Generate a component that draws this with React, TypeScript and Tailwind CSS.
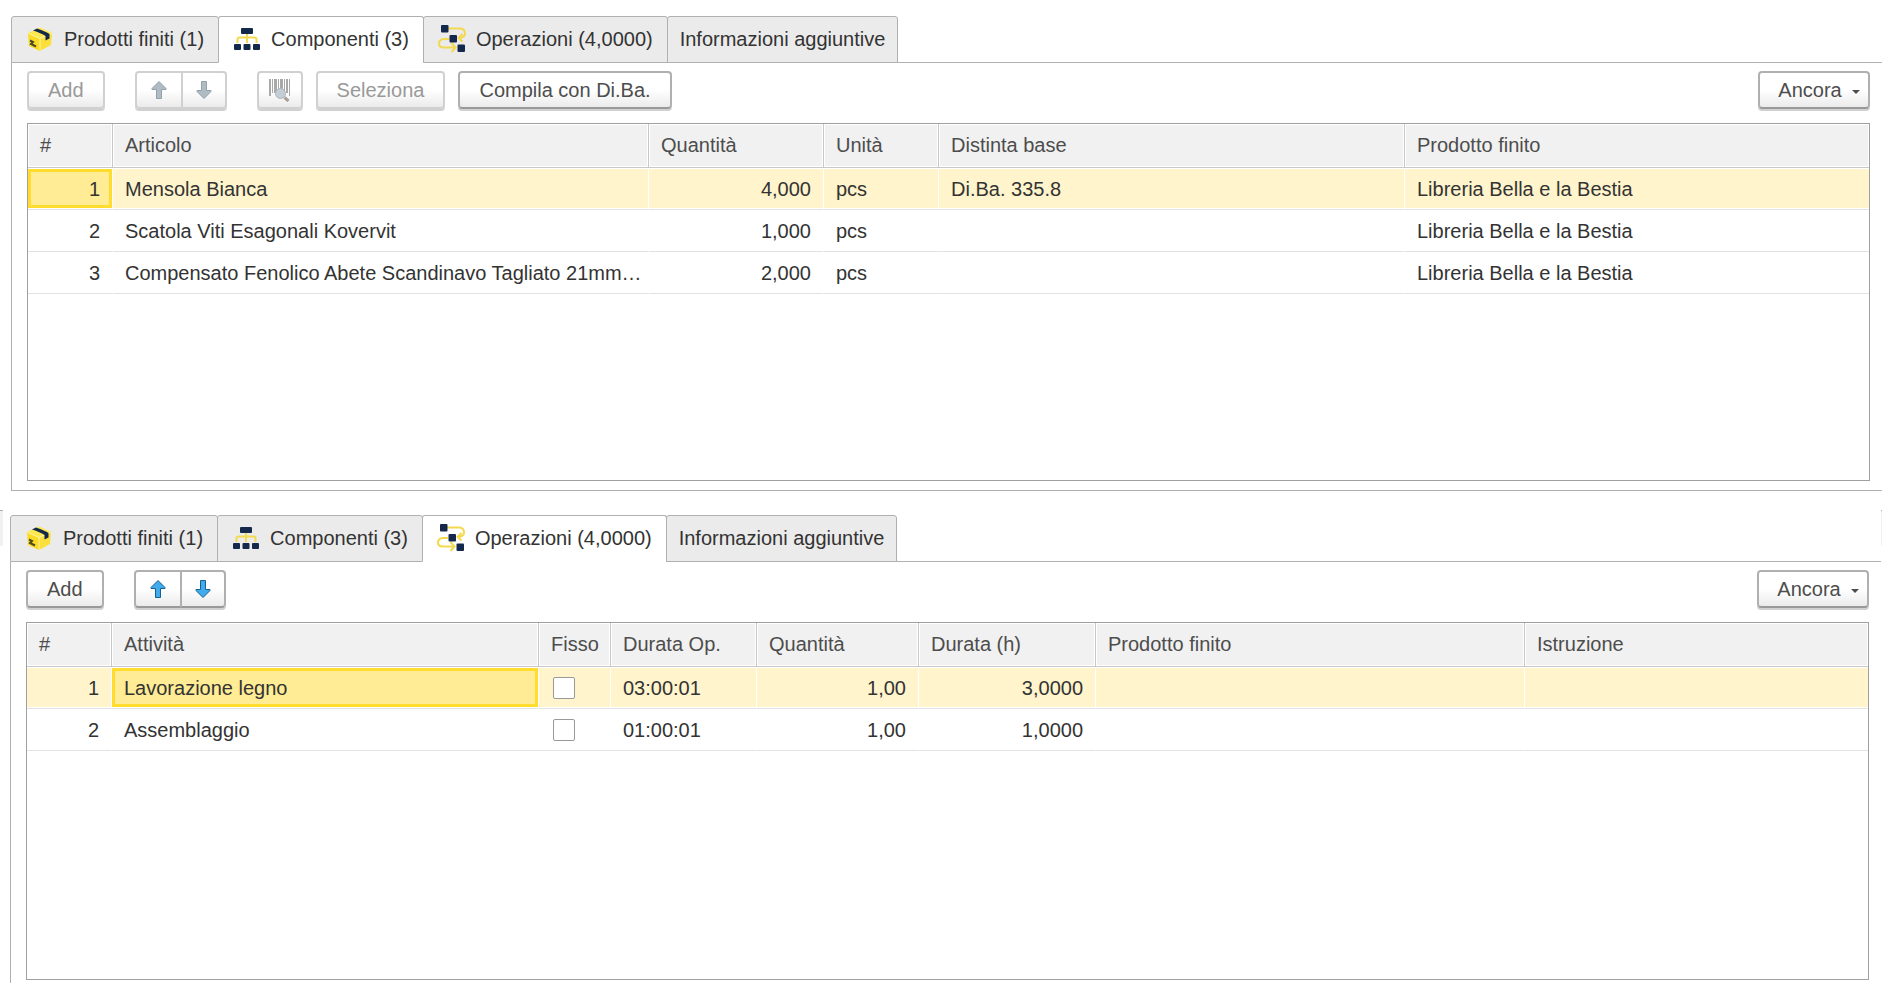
import type { ReactNode } from "react";
import clsx from "clsx";

function BoxIcon() {
  return (
    <svg width="28" height="28" viewBox="0 0 28 28" aria-hidden="true">
      <path d="M2 8 14 13.500v12.500L3 21Z" fill="#fbdb24" />
      <path d="M14 13.500 26 8l-1 12-11 6Z" fill="#fbe03c" />
      <path d="M2 8 14 2.500 26 8 14 13.500Z" fill="#fde84f" />
      <path d="M2.500 8.500 14 13.500v12M14 13.500 25.500 8.500" fill="none" stroke="#fff3a0" strokeWidth="1" />
      <path d="M7 5.500 11 3.500Q20 6.500 23.500 9v4.500L19.500 15.500V11Q15 8 7 5.500Z" fill="#14284b" />
      <path d="m4 15.500 3 1.500-2 2 5 2.500" fill="none" stroke="#4a4a2a" strokeWidth="2" />
    </svg>
  );
}

function TreeIcon() {
  return (
    <svg width="28" height="28" viewBox="0 0 28 28" aria-hidden="true">
      <path
        d="M14 9v9M4.500 18v-3.500q0-2 2-2h15q2 0 2 2V18"
        fill="none"
        stroke="#f2d94e"
        strokeWidth="2"
      />
      <rect x="8" y="3" width="12" height="6" rx="1" fill="#14284b" />
      <rect x="1" y="19" width="7" height="6" rx="1" fill="#14284b" />
      <rect x="10.500" y="19" width="7" height="6" rx="1" fill="#14284b" />
      <rect x="20" y="19" width="7" height="6" rx="1" fill="#14284b" />
    </svg>
  );
}

function FlowIcon() {
  return (
    <svg width="28" height="28" viewBox="0 0 28 28" aria-hidden="true">
      <g fill="none" stroke="#f2d94e" strokeWidth="2">
        <path d="M10 3.500h13q4 1 4 5 0 4-6 4.500" />
        <path d="m24.500 9-4 4 4 3.500" />
        <path d="M11 14H6q-5 .5-5 4.500t5 4h11" />
        <path d="m13.500 18 4 4.500-4 4.500" />
      </g>
      <rect x="3" y="0" width="7.500" height="7.500" rx="1" fill="#14284b" />
      <rect x="11.500" y="10" width="7.500" height="7.500" rx="1" fill="#14284b" />
      <rect x="19.500" y="19.500" width="7.500" height="7.500" rx="1" fill="#14284b" />
    </svg>
  );
}

function ArrowIcon({ down, disabled }: { down?: boolean; disabled?: boolean }) {
  return (
    <svg width="18" height="20" viewBox="0 0 18 20" aria-hidden="true">
      <path
        d={
          down
            ? "M6.500 1.500h5v9h4.500v1L9 18.500 2 11.500v-1h4.500Z"
            : "M6.500 18.500h5v-9h4.500v-1L9 1.500 2 8.500v1h4.500Z"
        }
        fill={disabled ? "#afbcc3" : "#42abee"}
        stroke={disabled ? "#93a1a9" : "#16608f"}
        strokeLinejoin="round"
      />
    </svg>
  );
}

function BarcodeIcon() {
  return (
    <svg width="24" height="24" viewBox="0 0 24 24" aria-hidden="true">
      <g fill="#a9a9a9">
        <rect x="1" y="1" width="2" height="17" />
        <rect x="4" y="1" width="1" height="14" />
        <rect x="6" y="1" width="3" height="14" />
        <rect x="10" y="1" width="1" height="11" />
        <rect x="12" y="1" width="3" height="10" />
        <rect x="16" y="1" width="1" height="12" />
        <rect x="18" y="1" width="2" height="14" />
        <rect x="21" y="1" width="1" height="17" />
      </g>
      <path d="m16.500 19.500 4 3.500" stroke="#aaa095" strokeWidth="3" />
      <circle cx="12.500" cy="15.500" r="5" fill="#c3ced6" stroke="#adb5bb" />
    </svg>
  );
}

const tabs = [
  { label: "Prodotti finiti (1)", icon: <BoxIcon /> },
  { label: "Componenti (3)", icon: <TreeIcon /> },
  { label: "Operazioni (4,0000)", icon: <FlowIcon /> },
  { label: "Informazioni aggiuntive", icon: null },
];

function Tabs({ active }: { active: number }) {
  return (
    <div role="tablist" className="flex border-b border-[#b0b0b0]">
      {tabs.map((tab, i) => (
        <button
          key={tab.label}
          type="button"
          role="tab"
          aria-selected={i === active}
          className={clsx(
            "-mb-px -ml-px flex h-[47px] items-center gap-2.5 whitespace-nowrap rounded-t-[3px] border border-[#b0b0b0] pb-0.5 text-[#333]",
            tab.icon ? "px-3.5" : "px-3",
            i === active ? "border-b-white bg-white" : "bg-[#ebebeb]"
          )}
        >
          {tab.icon}
          {tab.label}
        </button>
      ))}
    </div>
  );
}

type ButtonProps = {
  children: ReactNode;
  disabled?: boolean;
  label?: string;
  className?: string;
};

function Button({ children, disabled, label, className }: ButtonProps) {
  return (
    <button
      type="button"
      disabled={disabled}
      aria-label={label}
      className={clsx(
        "flex h-[38px] items-center justify-center whitespace-nowrap rounded border-2 bg-linear-to-b from-white from-50% to-[#ebebeb] shadow-[0_2px_0_#d0d0d0]",
        disabled
          ? "border-[#d0d0d0] text-[#999]"
          : "border-[#b0b0b0] border-b-[#999] text-[#4d4d4d]",
        className
      )}
    >
      {children}
    </button>
  );
}

function Toolbar({ disabled, children }: { disabled?: boolean; children?: ReactNode }) {
  return (
    <div className="mb-3.5 flex">
      <Button disabled={disabled} className="px-[19px]">
        Add
      </Button>
      <div className="ml-[30px] flex">
        <Button disabled={disabled} label="Sposta su" className="w-12 rounded-r-none">
          <ArrowIcon disabled={disabled} />
        </Button>
        <Button disabled={disabled} label="Sposta giù" className="-ml-0.5 w-[46px] rounded-l-none">
          <ArrowIcon down disabled={disabled} />
        </Button>
      </div>
      {children}
      <Button className="ml-auto w-28 gap-2.5 pl-2.5">
        Ancora
        <svg width="8" height="8" viewBox="0 0 8 8" aria-hidden="true">
          <path d="M0 4h8L4 8Z" fill="#4d4d4d" />
        </svg>
      </Button>
    </div>
  );
}

type Column = { title: string; width?: string; right?: boolean };

type GridProps = {
  columns: Column[];
  rows: ReactNode[][];
  activeCell: number;
};

function Grid({ columns, rows, activeCell }: GridProps) {
  return (
    <div className="min-h-[358px] overflow-hidden border border-[#a0a0a0]">
      <table className="w-full table-fixed border-separate border-spacing-0">
        <thead>
          <tr>
            {columns.map((col) => (
              <th
                key={col.title}
                scope="col"
                className={clsx(
                  "h-11 border-b border-r border-[#c8c8c8] bg-[#f1f1f1] px-3 pt-0 pb-0.5 text-left font-normal whitespace-nowrap text-[#4d4d4d] shadow-[inset_0_0_0_1px_#fff] last:border-r-0",
                  col.width
                )}
              >
                {col.title}
              </th>
            ))}
          </tr>
        </thead>
        <tbody>
          {rows.map((row, r) => (
            <tr key={r}>
              {row.map((cell, c) => (
                <td
                  key={c}
                  className="border-b border-r border-b-[#e2e2e2] border-r-white p-0 last:border-r-0"
                >
                  <div
                    className={clsx(
                      "my-px flex h-[39px] items-center overflow-hidden whitespace-nowrap",
                      columns[c].right && "justify-end",
                      r === 0 && c === activeCell
                        ? "border-3 border-[#ffdc2d] bg-[#ffec94] px-[9px]"
                        : "px-3",
                      r === 0 && c !== activeCell && "bg-[#fff4cc]"
                    )}
                  >
                    {cell}
                  </div>
                </td>
              ))}
            </tr>
          ))}
        </tbody>
      </table>
    </div>
  );
}

function FixedCheckbox({ name }: { name: string }) {
  return (
    <input
      type="checkbox"
      aria-label={`Fisso: ${name}`}
      className="ml-0.5 size-[22px] shrink-0 appearance-none rounded-xs border border-[#999] bg-white"
    />
  );
}

const componentColumns: Column[] = [
  { title: "#", width: "w-[85px]", right: true },
  { title: "Articolo", width: "w-[536px]" },
  { title: "Quantità", width: "w-[175px]", right: true },
  { title: "Unità", width: "w-[115px]" },
  { title: "Distinta base", width: "w-[466px]" },
  { title: "Prodotto finito" },
];

const componentRows = [
  ["1", "Mensola Bianca", "4,000", "pcs", "Di.Ba. 335.8", "Libreria Bella e la Bestia"],
  ["2", "Scatola Viti Esagonali Kovervit", "1,000", "pcs", "", "Libreria Bella e la Bestia"],
  [
    "3",
    "Compensato Fenolico Abete Scandinavo Tagliato 21mm…",
    "2,000",
    "pcs",
    "",
    "Libreria Bella e la Bestia",
  ],
];

const operationColumns: Column[] = [
  { title: "#", width: "w-[85px]", right: true },
  { title: "Attività", width: "w-[427px]" },
  { title: "Fisso", width: "w-[72px]" },
  { title: "Durata Op.", width: "w-[146px]" },
  { title: "Quantità", width: "w-[162px]", right: true },
  { title: "Durata (h)", width: "w-[177px]", right: true },
  { title: "Prodotto finito", width: "w-[429px]" },
  { title: "Istruzione" },
];

const operationRows = [
  ["1", "Lavorazione legno", <FixedCheckbox name="Lavorazione legno" />, "03:00:01", "1,00", "3,0000", "", ""],
  ["2", "Assemblaggio", <FixedCheckbox name="Assemblaggio" />, "01:00:01", "1,00", "1,0000", "", ""],
];

export default function App() {
  return (
    <main className="flex min-h-screen flex-col bg-white font-['Liberation_Sans',Arial,sans-serif] text-[20px] leading-6 text-[#333]">
      <section className="pl-3 pt-4">
        <Tabs active={1} />
        <div className="-ml-px border-b border-l border-[#b0b0b0] pt-2 pr-3 pb-[9px] pl-[15px]">
          <Toolbar disabled>
            <Button disabled label="Cerca codice a barre" className="ml-[30px] w-[46px]">
              <BarcodeIcon />
            </Button>
            <Button disabled className="ml-[13px] px-[19px]">
              Seleziona
            </Button>
            <Button className="ml-[13px] px-[19px]">Compila con Di.Ba.</Button>
          </Toolbar>
          <Grid columns={componentColumns} rows={componentRows} activeCell={0} />
        </div>
      </section>

      <div className="flex grow">
        <div className="mt-[19px] h-9 w-[3px] shrink-0 border-t border-[#b0b0b0] bg-[#f1f1f1]" />
        <section className="mr-px ml-2 flex min-w-0 grow flex-col pt-6">
          <Tabs active={2} />
          <div className="-ml-px grow border-l border-[#b0b0b0] pt-2 pr-3 pl-[15px]">
            <Toolbar />
            <Grid columns={operationColumns} rows={operationRows} activeCell={1} />
          </div>
        </section>
        <div className="mt-[19px] -ml-px h-9 w-px shrink-0 border-t border-[#b0b0b0] bg-[#f1f1f1]" />
      </div>
    </main>
  );
}
